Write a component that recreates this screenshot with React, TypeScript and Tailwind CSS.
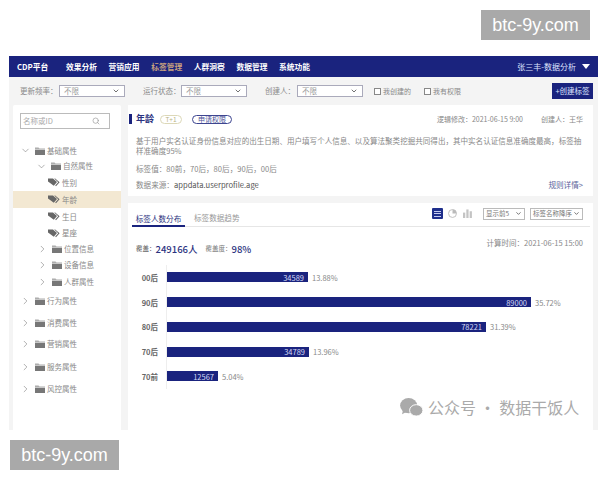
import { ChevronDown, ChevronRight, Search } from 'lucide-react';

const NAV = ['效果分析', '营销应用', '标签管理', '人群洞察', '数据管理', '系统功能'];

type TreeRow = {
  label: string;
  kind: 'folder' | 'tag';
  open?: boolean;
  indent: number;
  height: string;
  active?: boolean;
};

const TREE: TreeRow[] = [
  { label: '基础属性', kind: 'folder', open: true, indent: 0, height: 'h-[15px]' },
  { label: '自然属性', kind: 'folder', open: true, indent: 16, height: 'h-[16px]' },
  { label: '性别', kind: 'tag', indent: 28, height: 'h-[17px]' },
  { label: '年龄', kind: 'tag', indent: 28, height: 'h-[17px]', active: true },
  { label: '生日', kind: 'tag', indent: 28, height: 'h-[17px]' },
  { label: '星座', kind: 'tag', indent: 28, height: 'h-[16px]' },
  { label: '位置信息', kind: 'folder', indent: 17, height: 'h-[16px]' },
  { label: '设备信息', kind: 'folder', indent: 17, height: 'h-[16px]' },
  { label: '人群属性', kind: 'folder', indent: 17, height: 'h-[17px]' },
  { label: '行为属性', kind: 'folder', indent: 0, height: 'h-[22px]' },
  { label: '消费属性', kind: 'folder', indent: 0, height: 'h-[21px]' },
  { label: '营销属性', kind: 'folder', indent: 0, height: 'h-[22px]' },
  { label: '服务属性', kind: 'folder', indent: 0, height: 'h-[23px]' },
  { label: '风控属性', kind: 'folder', indent: 0, height: 'h-[22px]' },
];

const BARS = [
  { label: '00后', value: '34589', pct: '13.88%', width: 141 },
  { label: '90后', value: '89000', pct: '35.72%', width: 364 },
  { label: '80后', value: '78221', pct: '31.39%', width: 319 },
  { label: '70后', value: '34789', pct: '13.96%', width: 142 },
  { label: '70前', value: '12567', pct: '5.04%', width: 51 },
];

function FolderIcon() {
  return (
    <svg viewBox="0 0 10 8" className="w-[10px] h-[8px] shrink-0 text-[#777]" fill="currentColor">
      <path d="M0 0.5h3.5l1 1H10V2H0z" opacity="0.6" />
      <rect x="0" y="2.600" width="10" height="5.400" />
    </svg>
  );
}

function TagIcon() {
  return (
    <svg viewBox="0 0 12 9" className="w-[12px] h-[9px] shrink-0 text-[#666]" fill="currentColor">
      <path d="M0 0.5h5l4 3.600-3.200 3.600L0 3.600z" />
      <path d="M6.200 0.500h1L11.600 4.200 8 8.200l-.8-.6 3-3.400z" />
    </svg>
  );
}

function FilterSelect({ label, labelWidth }: { label: string; labelWidth: string }) {
  return (
    <div className="flex items-center">
      <span className={`${labelWidth} text-[7.5px] text-[#8a8a8a] whitespace-nowrap`}>{label}</span>
      <div className="flex items-center justify-between w-[66px] h-[12px] border border-[#aab] bg-white pl-1 pr-1 text-[7.5px] text-[#999]">
        不限
        <ChevronDown className="w-[8px] h-[8px] text-[#555]" strokeWidth={2.5} />
      </div>
    </div>
  );
}

function MiniSelect({ label, width }: { label: string; width: string }) {
  return (
    <div className={`flex items-center justify-between ${width} h-[12px] border border-[#bbb] px-[2px] text-[6.5px] text-[#777] whitespace-nowrap`}>
      <span>{label}</span>
      <ChevronDown className="w-[7px] h-[7px] shrink-0 text-[#444]" strokeWidth={2.5} />
    </div>
  );
}

function TreeList() {
  return (
    <div className="mt-[14px]">
      {TREE.map((row) => (
        <div
          key={row.label}
          className={`flex items-center ${row.height} ${row.active ? 'bg-[#f3e8d2]' : ''}`}
          style={{ paddingLeft: 7 + row.indent }}
        >
          {row.kind === 'folder' &&
            (row.open ? (
              <ChevronDown className="w-[11px] h-[11px] mr-[4px] shrink-0 text-[#777]" strokeWidth={1.25} />
            ) : (
              <ChevronRight className="w-[11px] h-[14px] mr-[4px] shrink-0 text-[#777]" strokeWidth={1.25} />
            ))}
          {row.kind === 'folder' ? <FolderIcon /> : <TagIcon />}
          <span className="ml-[2px] text-[7.5px] text-[#888] whitespace-nowrap">{row.label}</span>
        </div>
      ))}
    </div>
  );
}

export default function App() {
  return (
    <div className="relative w-[600px] h-[480px] bg-white overflow-hidden pt-[56px] pl-[9px] font-['Noto_Sans_CJK_SC','Noto_Sans',sans-serif]">
      <div className="absolute top-[10px] left-[481px] w-[109px] h-[30px] bg-[#a9a9a9] flex items-center justify-center text-white text-[18px] font-['Liberation_Sans',sans-serif]">
        btc-9y.com
      </div>
      <div className="absolute top-[440px] left-[10px] w-[109px] h-[30px] bg-[#a9a9a9] flex items-center justify-center text-white text-[18px] font-['Liberation_Sans',sans-serif]">
        btc-9y.com
      </div>

      <div className="w-[589px] h-[374px] bg-[#f4f4f4] flex flex-col">
        <header className="h-[21px] shrink-0 bg-[#1a237e] flex items-center pl-[8px] pr-[8px] text-white text-[7.75px] font-bold">
          <span className="w-[49px]">CDP平台</span>
          <nav className="flex gap-[11.6px]">
            {NAV.map((item) => (
              <span key={item} className={item === '标签管理' ? 'text-[#c9a27e]' : ''}>
                {item}
              </span>
            ))}
          </nav>
          <div className="ml-auto flex items-center gap-[6px] font-normal text-[8px] text-[#dfe3ff]">
            张三丰-数据分析
            <span className="w-0 h-0 border-x-[4px] border-x-transparent border-t-[5px] border-t-white" />
          </div>
        </header>

        <div className="h-[28px] shrink-0 flex items-center pl-[11px] pr-[5px]">
          <FilterSelect label="更新频率：" labelWidth="w-[39px]" />
          <div className="ml-[18px]">
            <FilterSelect label="运行状态：" labelWidth="w-[38px]" />
          </div>
          <div className="ml-[18px]">
            <FilterSelect label="创建人：" labelWidth="w-[32px]" />
          </div>
          <label className="ml-[11px] flex items-center gap-[2px] text-[7px] text-[#888]">
            <span className="w-[7px] h-[7px] border border-[#888] bg-white" />
            我创建的
          </label>
          <label className="ml-[13px] flex items-center gap-[2px] text-[7px] text-[#888]">
            <span className="w-[7px] h-[7px] border border-[#888] bg-white" />
            我有权限
          </label>
          <button className="ml-auto w-[41px] h-[16px] bg-[#1a237e] text-[7.5px] text-[#dfe3ff]">+创建标签</button>
        </div>

        <div className="flex-1 flex pl-[4px] min-h-0">
          <aside className="w-[108px] shrink-0 bg-white rounded-t-[2px] pt-[8px]">
            <div className="ml-[7px] w-[90px] h-[16px] border border-[#bbb] flex items-center justify-between px-[2px] text-[7.5px] text-[#aaa]">
              名称或ID
              <Search className="w-[8px] h-[8px] mr-[7px] text-[#999]" />
            </div>
            <TreeList />
          </aside>

          <main className="ml-[7px] w-[465px] flex flex-col gap-[7px]">
            <section className="h-[91px] bg-white pr-[10px] pt-[9px] text-[7.6px] text-[#888]">
              <div className="flex items-center h-[10px]">
                <span className="ml-[1px] w-[3px] h-[10px] bg-[#1a237e]" />
                <span className="ml-[4px] text-[9px] font-bold text-[#2b3280]">年龄</span>
                <span className="ml-[6px] w-[22px] h-[9px] rounded-full border border-[#dcd8b8] text-[6.5px] leading-[7px] text-[#b9b488] text-center">T+1</span>
                <span className="ml-[10px] w-[40px] h-[9px] rounded-full border border-[#3d4590] text-[7px] leading-[7px] text-[#4d5398] text-center">申请权限</span>
                <span className="ml-auto text-[7px]">逻辑修改：2021-06-15 9:00</span>
                <span className="ml-[18px] text-[7px]">创建人：王华</span>
              </div>
              <p className="mt-[12px] ml-[8px] leading-[10px] text-[7.55px]">
                基于用户实名认证身份信息对应的出生日期、用户填写个人信息、以及算法聚类挖掘共同得出，其中实名认证信息准确度最高，标签抽样准确度95%
              </p>
              <p className="mt-[7px] ml-[8px] leading-[11px]">标签值：80前，70后，80后，90后，00后</p>
              <div className="mt-[5px] ml-[8px] flex justify-between leading-[11px]">
                <span>
                  数据来源：<span className="text-[#555]">appdata.userprofile.age</span>
                </span>
                <span className="text-[#5a5f9a]">规则详情&gt;</span>
              </div>
            </section>

            <section className="flex-1 bg-white pl-[4px] pr-[3px]">
              <div className="h-[24px] flex items-end border-b border-[#e6e6e6] text-[7.6px] pr-[7px]">
                <span className="w-[53px] h-[24px] pt-[10px] leading-[11px] text-center text-[#2b3280] border-b-[2px] border-[#1a237e] -mb-px">标签人数分布</span>
                <span className="ml-[9px] h-[24px] pt-[10px] leading-[11px] text-[#999]">标签数据趋势</span>
                <div className="ml-auto flex items-center h-[24px] pb-[1px]">
                  <span className="w-[11px] h-[11px] rounded-[1px] bg-[#1f2f8c] flex flex-col justify-center gap-[1.5px] px-[2px]">
                    <span className="h-px bg-[#c5cbf0]" />
                    <span className="h-px bg-[#c5cbf0]" />
                    <span className="h-px bg-[#c5cbf0]" />
                  </span>
                  <svg viewBox="0 0 10 10" className="ml-[5px] w-[9px] h-[9px] text-[#bbb]" fill="none" stroke="currentColor">
                    <circle cx="5" cy="5" r="4.400" strokeWidth="1" />
                    <path d="M5 5V0.600A4.400 4.400 0 0 1 9.400 5z" fill="currentColor" stroke="none" />
                  </svg>
                  <svg viewBox="0 0 10 10" className="ml-[6px] w-[9px] h-[9px] text-[#c4c4c4]" fill="currentColor">
                    <rect x="0" y="4" width="2.500" height="6" />
                    <rect x="3.700" y="0.500" width="2.500" height="9.500" />
                    <rect x="7.400" y="2.500" width="2.500" height="7.500" />
                  </svg>
                  <div className="ml-[11px]">
                    <MiniSelect label="显示前5" width="w-[42px]" />
                  </div>
                  <div className="ml-[5px]">
                    <MiniSelect label="标签名称降序" width="w-[53px]" />
                  </div>
                </div>
              </div>

              <div className="flex justify-between items-start pr-[7px] pl-[4px] pt-[11px] h-[38px]">
                <div className="flex items-center h-[18px] mt-[2px] text-[6.5px] text-[#555]">
                  覆盖：
                  <span className="text-[9.5px] text-[#2b3280] font-medium">249166人</span>
                  <span className="ml-[8px] text-[#777]">覆盖度：</span>
                  <span className="text-[9.5px] text-[#2b3280] font-medium">98%</span>
                </div>
                <span className="text-[7.5px] text-[#888] leading-[10px]">计算时间：2021-06-15 15:00</span>
              </div>

              <div>
                {BARS.map((bar) => (
                  <div key={bar.value} className="flex items-center h-[24.75px]">
                    <span className="w-[26px] mr-[8px] text-right text-[7.5px] font-bold text-[#666]">{bar.label}</span>
                    <div className="flex items-center h-full border-l border-[#eeeeee]">
                      <div
                        className="h-[10px] bg-[#1a237e] flex items-center justify-end pr-[4px] text-[7.5px] text-[#d5d9f5]"
                        style={{ width: bar.width }}
                      >
                        {bar.value}
                      </div>
                      <span className="ml-[4px] text-[7.5px] text-[#888]">{bar.pct}</span>
                    </div>
                  </div>
                ))}
              </div>
            </section>
          </main>
        </div>
      </div>

      <div className="absolute left-[400px] top-[395px] flex items-center text-[#aaaaaa]">
        <svg viewBox="0 0 24 20" className="w-[23px] h-[19px]" fill="currentColor">
          <ellipse cx="9" cy="8" rx="9" ry="8" />
          <path d="M3 13l-1 4 5-2.500z" />
          <ellipse cx="17" cy="13" rx="7" ry="6" stroke="white" strokeWidth="1" />
        </svg>
        <span className="ml-[5px] text-[16px] whitespace-nowrap">公众号 · 数据干饭人</span>
      </div>
    </div>
  );
}
